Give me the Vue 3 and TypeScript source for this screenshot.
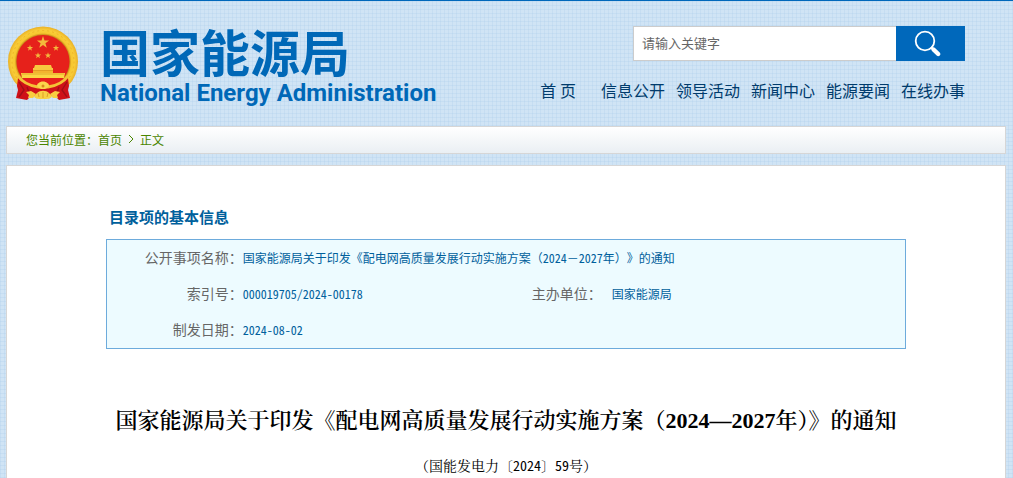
<script setup lang="ts">
import { ref } from 'vue'

const keyword = ref<string>('')
const navItems: string[] = ['首 页', '信息公开', '领导活动', '新闻中心', '能源要闻', '在线办事']

function star(cx: number, cy: number, r: number): string {
  return Array.from({ length: 10 }, (_, i) => {
    const radius = i % 2 ? r * 0.4 : r
    const a = (Math.PI / 5) * i - Math.PI / 2
    return `${(cx + radius * Math.cos(a)).toFixed(2)},${(cy + radius * Math.sin(a)).toFixed(2)}`
  }).join(' ')
}
const stars: string[] = [star(35, 16.5, 6.4), star(22, 22, 3.3), star(48, 22, 3.3), star(30, 29.5, 3.3), star(40, 29.5, 3.3)]
</script>

<template>
  <div class="page">
    <header class="header">
      <a class="brand" href="#" aria-label="国家能源局">
        <svg class="emblem" viewBox="0 0 70 74" aria-hidden="true">
          <defs>
            <radialGradient id="gold" cx="50%" cy="50%" r="50%">
              <stop offset="76%" stop-color="#c98a1a" />
              <stop offset="81%" stop-color="#f6c62f" />
              <stop offset="90%" stop-color="#f9cd38" />
              <stop offset="100%" stop-color="#eab026" />
            </radialGradient>
          </defs>
          <circle cx="35" cy="35.5" r="35" fill="url(#gold)" />
          <circle cx="35" cy="35.5" r="31" fill="none" stroke="#e9a821" stroke-width="1" stroke-dasharray="2 3" opacity=".7" />
          <circle cx="35" cy="35.5" r="26.5" fill="#e6211b" />
          <polygon v-for="(s, i) in stars" :key="i" :points="s" fill="#f3b93c" />
          <path d="M27 39h16l1 3h1v2H25v-2h1z" fill="#f7c93f" />
          <path d="M25 44h20v3H25z" fill="#f3b52f" />
          <path d="M13 47h44l-1 5H14z" fill="#fbd743" />
          <path d="M25 44.5h20M14 48h42" stroke="#d9921f" stroke-width=".7" />
          <path d="M10 52l5 1h40l5-1 1 8-1 4 2 8-11 2-4-4H23l-4 4-11-2 2-8-1-4z" fill="#cf1118" />
          <path d="M15 53h40c-4 5-9 7-14 8H29c-5-1-10-3-14-8z" fill="#e6211b" />
          <path d="M11 56l5 8-5 7M59 56l-5 8 5 7M19 61l3 8M51 61l-3 8" fill="none" stroke="#a00f17" stroke-width="1.4" />
          <path d="M10 50c5 7 13 10 20 11h10c7-1 15-4 20-11" fill="none" stroke="#f4c236" stroke-width="3" />
          <path d="M29 60c0-2 1-3 2-3 1-2 7-2 8 0 1 0 2 1 2 3l-2 2-2 1h-4l-2-1z" fill="#fbd64c" />
          <circle cx="35" cy="60" r="1.5" fill="#d98d1c" />
          <path d="M18 66l5-1 5 3-3 4h-5l1-3zM52 66l-5-1-5 3 3 4h5l-1-3z" fill="#f8cd40" />
          <path d="M29 67c3-3 9-3 12 0l3 3c-1 3-4 3-9 3s-8 0-9-3z" fill="#f8d044" />
          <path d="M31 71l-1-4M35 72v-6M39 71l1-4" stroke="#d58a1a" stroke-width=".7" />
        </svg>
        <span class="brand-text">
          <span class="brand-cn">国家能源局</span>
          <span class="brand-en">National Energy Administration</span>
        </span>
      </a>
      <div class="tools">
        <form class="search" role="search" @submit.prevent>
          <input v-model="keyword" type="text" placeholder="请输入关键字" aria-label="请输入关键字" />
          <button type="submit" aria-label="搜索">
            <svg viewBox="0 0 28 28" aria-hidden="true">
              <circle cx="11" cy="11" r="9.3" fill="none" stroke="#fff" stroke-width="1.8" />
              <path d="M17 17l3 3" stroke="#fff" stroke-width="2" />
              <path d="M19.5 19.5l4.7 4.5" stroke="#fff" stroke-width="4.4" stroke-linecap="round" />
            </svg>
          </button>
        </form>
        <nav class="nav" aria-label="主导航">
          <a v-for="item in navItems" :key="item" href="#">{{ item }}</a>
        </nav>
      </div>
    </header>

    <nav class="crumbs" aria-label="面包屑">
      <span>您当前位置：</span><a href="#">首页</a>
      <svg viewBox="0 0 6 10" aria-hidden="true"><path d="M1 1l4 4-4 4" fill="none" stroke="#4a8500" /></svg>
      <span>正文</span>
    </nav>

    <main class="content">
      <section class="info">
        <h2>目录项的基本信息</h2>
        <table>
          <colgroup>
            <col class="col-label" />
            <col class="col-value" />
            <col class="col-unit" />
            <col />
          </colgroup>
          <tbody>
            <tr>
              <th scope="row">公开事项名称：</th>
              <td colspan="3">国家能源局关于印发《配电网高质量发展行动实施方案（2024－2027年）》的通知</td>
            </tr>
            <tr>
              <th scope="row">索引号：</th>
              <td>000019705/2024-00178</td>
              <th scope="row">主办单位：</th>
              <td class="unit">国家能源局</td>
            </tr>
            <tr>
              <th scope="row">制发日期：</th>
              <td colspan="3">2024-08-02</td>
            </tr>
          </tbody>
        </table>
      </section>
      <h1>国家能源局关于印发《配电网高质量发展行动实施方案（2024—2027年）》的通知</h1>
      <p class="doc-no">（国能发电力〔<span>2024</span>〕<span>59</span>号）</p>
    </main>
  </div>
</template>

<style>
body {
  background-color: #d0e4f5;
  background-image:
    repeating-linear-gradient(0deg, rgba(150, 190, 228, 0.17) 0 1px, transparent 1px 4px),
    repeating-linear-gradient(90deg, rgba(150, 190, 228, 0.17) 0 1px, transparent 1px 4px);
}
</style>

<style scoped>
.page {
  border-top: 1px solid #0068bb;
  padding: 0 7px 0 6px;
  height: 100vh;
  overflow: hidden;
  box-sizing: border-box;
  display: flex;
  flex-direction: column;
  font-family: "Liberation Sans", "Noto Sans CJK SC", sans-serif;
  text-spacing-trim: space-all;
}
a {
  color: inherit;
  text-decoration: none;
}
.header {
  display: flex;
  justify-content: space-between;
  align-items: flex-start;
  padding: 25px 41px 0 2px;
  height: 100px;
  flex: none;
}
.brand {
  display: flex;
  gap: 22px;
  color: #0068b7;
  white-space: nowrap;
}
.emblem {
  width: 70px;
  height: 74px;
}
.brand-text {
  display: flex;
  flex-direction: column;
  gap: 6px;
  font-weight: 700;
}
.brand-cn {
  font-family: "Noto Sans CJK SC", sans-serif;
  font-size: 50px;
  line-height: 48px;
}
.brand-en {
  font-family: Roboto, "Liberation Sans", sans-serif;
  font-size: 24px;
  line-height: 26px;
}
.tools {
  display: flex;
  flex-direction: column;
  align-items: flex-end;
}
.search {
  display: flex;
  height: 35px;
}
.search input {
  width: 263px;
  box-sizing: border-box;
  border: 1px solid #ccc;
  border-right: 0;
  border-radius: 0;
  padding: 0 8px 2px;
  background: #fff;
  color: #666;
  font: 13px "Noto Sans CJK SC", sans-serif;
  outline: none;
}
.search input::placeholder {
  color: #666;
}
.search button {
  width: 69px;
  border: 0;
  padding: 0 6px 0 0;
  background: #0068bb;
  display: flex;
  align-items: center;
  justify-content: center;
}
.search svg {
  width: 28px;
  height: 28px;
}
.nav {
  display: flex;
  gap: 11px;
  margin-top: 17px;
  color: #003b6c;
  font: 16px/24px "Noto Sans CJK SC", sans-serif;
  white-space: pre;
}
.nav a:first-child {
  margin-right: 14px;
}
.crumbs {
  display: flex;
  align-items: center;
  flex: none;
  height: 28px;
  box-sizing: border-box;
  padding: 0 19px 2px;
  border: 1px solid #d6d6d6;
  background: linear-gradient(#fff, #eaeff3);
  color: #4a8500;
  font: 12px "Noto Sans Mono CJK SC", "Noto Sans CJK SC", sans-serif;
}
.crumbs svg {
  width: 6px;
  height: 10px;
  margin: 0 6px;
}
.content {
  flex: 1;
  margin-top: 11px;
  border: 1px solid #d6d6d6;
  border-bottom: 0;
  background: #fff;
  color: #000;
}
.info {
  width: 90%;
  max-width: 800px;
  margin: 41px auto 0;
}
h2 {
  margin: 0 0 12px 3px;
  color: #00609c;
  font: 700 15px/20px "Noto Sans CJK SC", sans-serif;
}
table {
  width: 100%;
  table-layout: fixed;
  border-spacing: 0;
  border: 1px solid #6dabdc;
  background: #edfbff;
}
tr {
  height: 36px;
}
.col-label {
  width: 17%;
}
.col-value {
  width: 36%;
}
.col-unit {
  width: 9%;
}
th,
td {
  padding: 0 0 2px;
  font-family: "Noto Sans Mono CJK SC", "Noto Sans CJK SC", sans-serif;
}
th {
  color: #666;
  font-size: 14px;
  font-weight: 400;
  text-align: right;
}
td {
  color: #00609c;
  font-size: 12px;
}
td.unit {
  padding-left: 10px;
}
h1 {
  margin: 56px 0 0;
  font: 600 22px/32px "Liberation Serif", "Noto Serif CJK SC", "Noto Sans CJK SC", serif;
  text-align: center;
  text-spacing-trim: normal;
}
.doc-no {
  margin: 18px 0 0;
  font: 14px/20px "Noto Serif CJK SC", "Noto Sans CJK SC", serif;
  text-align: center;
}
.doc-no span {
  font-family: "Noto Sans Mono CJK SC", "Noto Sans CJK SC", sans-serif;
}
</style>
